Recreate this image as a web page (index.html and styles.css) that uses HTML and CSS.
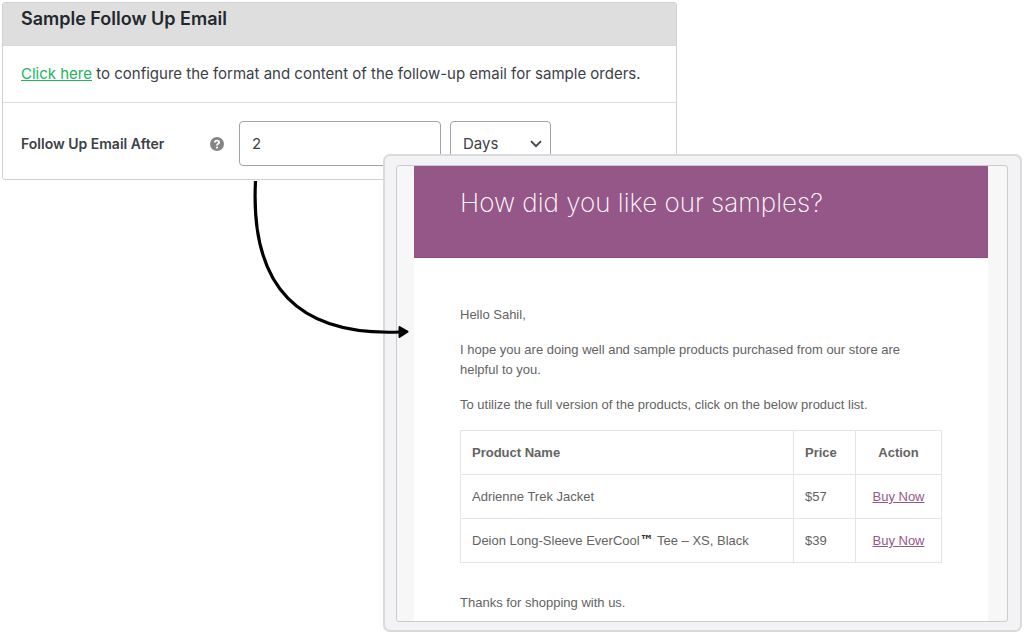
FILE: index.html
```
<!DOCTYPE html>
<html lang="en">
<head>
<meta charset="utf-8">
<meta name="viewport" content="width=device-width, initial-scale=1">
<title>Sample Follow Up Email</title>
<link rel="stylesheet" href="styles.css">
</head>
<body>
<main class="stage">
  <section class="settings">
    <h2 class="settings-title">Sample Follow Up Email</h2>
    <p class="settings-note"><a href="#configure">Click here</a> to configure the format and content of the follow-up email for sample orders.</p>
    <form class="settings-row">
      <label class="settings-label" for="delay">Follow Up Email After</label>
      <svg class="help" viewBox="0 0 14 14" role="img" aria-label="Help">
        <circle cx="7" cy="7" r="7" fill="#858585"/>
        <path d="M4.9 5.5C4.9 3 9.1 3 9.1 5.4C9.1 6.9 7 6.8 7 8.4" fill="none" stroke="#fff" stroke-width="1.8"/>
        <circle cx="7" cy="10.6" r="1.1" fill="#fff"/>
      </svg>
      <input class="field field-number" id="delay" type="text" value="2">
      <span class="select-wrap">
        <select class="field field-unit" aria-label="Delay unit">
          <option>Days</option>
          <option>Weeks</option>
        </select>
        <svg class="chevron" viewBox="0 0 12 8" aria-hidden="true"><path d="M1 1.2L6 6.2L11 1.2" fill="none" stroke="#3c4146" stroke-width="1.7"/></svg>
      </span>
    </form>
  </section>

  <article class="frame">
    <div class="canvas">
      <div class="email">
        <header class="email-header"><h1>How did you like our samples?</h1></header>
        <div class="email-body">
          <p>Hello Sahil,</p>
          <p>I hope you are doing well and sample products purchased from our store are helpful to you.</p>
          <p>To utilize the full version of the products, click on the below product list.</p>
          <table class="products">
            <thead>
              <tr><th class="col-name">Product Name</th><th class="col-price">Price</th><th class="col-action">Action</th></tr>
            </thead>
            <tbody>
              <tr><td>Adrienne Trek Jacket</td><td>$57</td><td class="col-action"><a href="#jacket">Buy Now</a></td></tr>
              <tr><td>Deion Long-Sleeve EverCool<span class="tm">™</span> Tee – XS, Black</td><td>$39</td><td class="col-action"><a href="#tee">Buy Now</a></td></tr>
            </tbody>
          </table>
          <p>Thanks for shopping with us.</p>
        </div>
      </div>
    </div>
  </article>

  <svg class="arrow" viewBox="0 0 160 162" aria-hidden="true">
    <path d="M5.500 1C0 108 49 156 150 152" fill="none" stroke="#000" stroke-width="3.200"/>
    <path d="M149.500 147L157.500 151.700L149.500 157Z" fill="#000" stroke="#000" stroke-width="2" stroke-linejoin="round"/>
  </svg>
</main>
</body>
</html>
```
FILE: styles.css
```
* { box-sizing: border-box; }

body {
  margin: 0;
  background: #fff;
  font-family: "Liberation Sans", Arial, sans-serif;
}

h1, h2, p { margin: 0; }

.stage {
  position: relative;
  min-height: 100vh;
  padding: 2px;
}

.settings {
  width: 66.2%;
  border: 1px solid #d0d0d2;
  border-radius: 3px;
  font-family: Inter, sans-serif;
  color: #3c4146;
  overflow: hidden;
}

.settings-title {
  padding: 4px 18px 14px;
  background: #dedede;
  border-bottom: 1px solid #d8d8d8;
  font-size: 18px;
  line-height: 24px;
  font-weight: 600;
  color: #23282d;
}

.settings-note {
  padding: 16px 18px;
  border-bottom: 1px solid #dcdcde;
  font-size: 15px;
  line-height: 24px;
  white-space: nowrap;
}

.settings-note a { color: #22b35e; }

.settings-row {
  display: flex;
  align-items: center;
  padding: 18px 18px 13px;
}

.settings-label {
  flex: 0 0 189px;
  font-size: 14px;
  line-height: 24px;
  font-weight: 600;
}

.help {
  width: 14px;
  height: 14px;
  margin-right: 15px;
}

.field {
  height: 45px;
  padding: 0 12px;
  border: 1px solid #a0a3a6;
  border-radius: 4px;
  background: #fff;
  color: #3c4146;
  font: 15px Inter, sans-serif;
}

.field-number { width: 202px; margin-right: 9px; }

.select-wrap { position: relative; }

.field-unit {
  width: 101px;
  appearance: none;
  vertical-align: top;
}

.chevron {
  position: absolute;
  right: 9px;
  top: 19px;
  width: 12px;
  height: 8px;
  pointer-events: none;
}

.frame {
  position: absolute;
  left: 383px;
  right: 2px;
  top: 154px;
  padding: 9px 12px 8px 11px;
  background: #f3f3f5;
  border: 2px solid #dad9db;
  border-radius: 7px;
}

.canvas {
  padding: 0 19px 0 17px;
  background: #f7f7f7;
  border: 1px solid #ccc;
  border-radius: 3px;
}

.email { background: #fff; }

.email-header {
  padding: 17px 46px 35px;
  background: #955788;
  border-bottom: 1px solid #8b4d80;
}

.email-header h1 {
  color: #fff;
  font-family: Inter, sans-serif;
  font-size: 26px;
  line-height: 39px;
  font-weight: 200;
}

.email-body {
  padding: 47px 46px 8px;
  color: #636363;
  font-size: 13px;
  line-height: 20px;
}

.email-body p {
  max-width: 470px;
  margin-bottom: 15px;
}

.email-body p:last-child { margin-bottom: 0; }

.products {
  width: 100%;
  margin-bottom: 30px;
  border-collapse: collapse;
}

.products th,
.products td {
  padding: 12px 11px 11px;
  border: 1px solid #e5e5e5;
  text-align: left;
}

.products .col-price { width: 62px; }

.products .col-action { width: 86px; text-align: center; }

.products a { color: #955788; }

.tm {
  font-family: "DejaVu Sans", sans-serif;
  font-size: 14px;
  line-height: 1;
  font-weight: 700;
  color: #333;
}

.arrow {
  position: absolute;
  left: 250px;
  top: 180px;
  width: 160px;
  height: 162px;
}
```
